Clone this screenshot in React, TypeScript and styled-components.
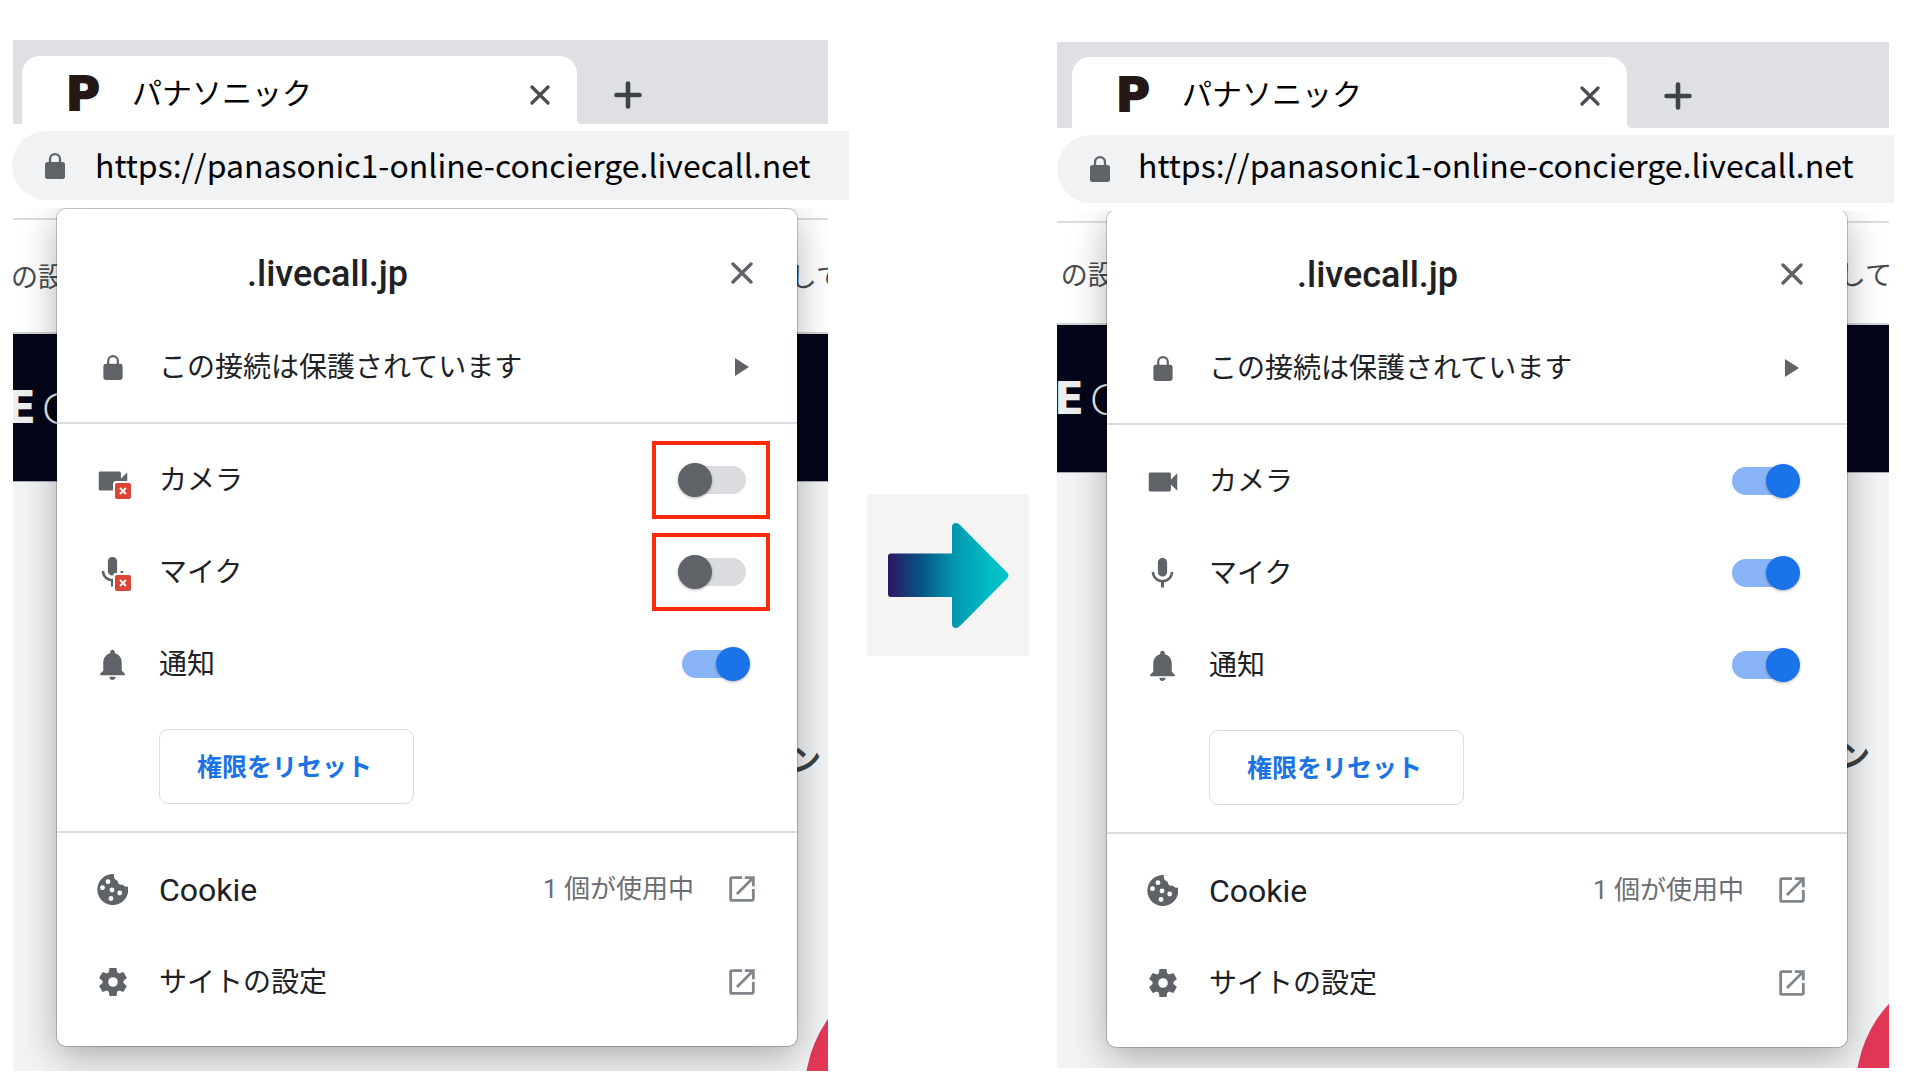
import React from "react";
import styled, { createGlobalStyle, css } from "styled-components";
import { MdMic, MdNotifications, MdOpenInNew, MdVideocam } from "react-icons/md";

const GlobalStyle = createGlobalStyle`
  *, *::before, *::after { box-sizing: border-box; }
  body {
    margin: 0;
    background: #fff;
    color: #202124;
    font-family: Roboto, "Noto Sans CJK JP", sans-serif;
  }
  button, input { font: inherit; color: inherit; }
  svg { display: block; }
`;

const Comparison = styled.main`
  display: flex;
  align-items: flex-start;
  padding: 40px 26px 0 12px;
`;

const Browser = styled.section<{ $drop: number }>`
  flex: 1 1 0;
  min-width: 0;
  padding-top: ${(p) => p.$drop}px;
`;

const TabStrip = styled.div<{ $start: number; $end: number; $inset: number; $top: number; $tall: number }>`
  display: flex;
  height: ${(p) => p.$tall}px;
  margin: 0 ${(p) => p.$end}px 0 ${(p) => p.$start}px;
  padding: ${(p) => p.$top}px 0 0 ${(p) => p.$inset}px;
  background: #dfe0e4;
`;

const Tab = styled.div`
  position: relative;
  flex: 0 1 555px;
  display: flex;
  align-items: flex-start;
  padding: 13px 26px 0 44px;
  border-radius: 18px 18px 0 0;
  background: #fff;

  &::after {
    content: "";
    position: absolute;
    left: 100%;
    bottom: 0;
    width: 5px;
    height: 5px;
    background: radial-gradient(circle at 100% 0, transparent 5px, #fff 5px);
  }
`;

const Favicon = styled.span`
  width: 66px;
  font: 700 46px/50px "DejaVu Sans", sans-serif;
  color: #231815;
  -webkit-text-stroke: 2px #231815;
`;

const TabTitle = styled.span`
  flex: 1;
  font: 400 30px/44px "Noto Sans CJK JP", sans-serif;
  color: #000;
  white-space: nowrap;
`;

const IconButton = styled.button<{ $size: number }>`
  display: grid;
  place-items: center;
  flex: none;
  width: ${(p) => p.$size}px;
  height: ${(p) => p.$size}px;
  padding: 0;
  border: 0;
  background: none;
  color: #5f6368;
`;

const TabClose = styled(IconButton)`
  margin-top: 15px;
  color: #494c50;
`;

const NewTab = styled(IconButton)`
  margin: 22px 0 0 34px;
  color: #3f4246;
`;

const AddressBar = styled.div<{ $gap: number; $tall: number }>`
  display: flex;
  align-items: center;
  height: ${(p) => p.$tall}px;
  margin-top: ${(p) => p.$gap}px;
  padding-left: 33px;
  border-radius: 36px 0 0 36px;
  background: #f1f2f4;
  color: #5f6368;
`;

const Url = styled.input<{ $indent: number; $lift: number }>`
  flex: 1;
  min-width: 0;
  height: 48px;
  margin: 0 0 ${(p) => p.$lift}px ${(p) => p.$indent}px;
  padding: 0;
  border: 0;
  outline: 0;
  background: none;
  font: 400 32px/48px "Noto Sans CJK JP", sans-serif;
  color: #000;
`;

const Viewport = styled.div<{ $start: number; $end: number }>`
  position: relative;
  display: grid;
  overflow: hidden;
  margin: 8px ${(p) => p.$end}px 0 ${(p) => p.$start}px;
`;

const Site = styled.div`
  grid-area: 1 / 1;
  display: flex;
  flex-direction: column;
  min-width: 0;
  background: #f1f3f5;
`;

const SiteNotice = styled.div<{ $tall: number; $line: number; $pull: number; $push: number }>`
  display: flex;
  justify-content: space-between;
  height: ${(p) => p.$tall}px;
  padding-top: 10px;
  background: linear-gradient(#dcdcdc, #dcdcdc) 0 10px / 100% 2px no-repeat, #fff;
  border-bottom: 2px solid #d3d6d6;
  font: 400 27px/${(p) => p.$line}px "Noto Sans CJK JP", sans-serif;
  color: #4a4d50;
  white-space: nowrap;

  span:first-child { margin-left: -${(p) => p.$pull}px; }
  span:last-child { margin-right: -${(p) => p.$push}px; }
`;

const SiteBanner = styled.div<{ $pull: number }>`
  display: flex;
  gap: 6px;
  height: 148px;
  border-bottom: 1px solid #a9abb8;
  background: #040619;
  color: #eceded;
  font: 700 44px/147px "DejaVu Sans", sans-serif;

  b { margin-left: -${(p) => p.$pull}px; }
  span { font-family: Lato, sans-serif; font-weight: 300; }
`;

const SiteBody = styled.div<{ $top: number; $right: number }>`
  padding: ${(p) => p.$top}px ${(p) => p.$right}px 0 0;
  text-align: right;
  font: 700 30px/44px "Noto Sans CJK JP", sans-serif;
  color: #3c4144;
`;

const ChatBubble = styled.div<{ $right: number }>`
  position: absolute;
  right: -${(p) => p.$right}px;
  bottom: -144px;
  width: 248px;
  height: 248px;
  border-radius: 50%;
  background: #e43857;
`;

const Popup = styled.div<{ $margin: string }>`
  position: relative;
  grid-area: 1 / 1;
  margin: ${(p) => p.$margin};
  border-radius: 9px;
  background: #fff;
  box-shadow: 0 0 0 1px rgba(0, 0, 0, 0.2), 0 10px 36px rgba(0, 0, 0, 0.3);
`;

const Group = styled.div<{ $pad: string; $gap?: number }>`
  display: flex;
  flex-direction: column;
  align-items: stretch;
  gap: ${(p) => p.$gap ?? 0}px;
  padding: ${(p) => p.$pad};

  & + & { border-top: 2px solid #dadce0; }
`;

const rowStyle = css`
  display: flex;
  align-items: center;
  width: 100%;
  height: 92px;
  padding: 0 38px 0 37px;
  border: 0;
  background: none;
  text-align: left;
  font-size: 28px;
  line-height: 40px;
`;

const TitleRow = styled.div`
  ${rowStyle}
  justify-content: space-between;
  padding-left: 190px;
`;

const Title = styled.h2`
  margin: 0;
  padding-top: 2px;
  font-size: 36px;
  font-weight: 500;
  line-height: 40px;
`;

const ActionRow = styled.button`
  ${rowStyle}
`;

const PermissionRow = styled.label`
  ${rowStyle}
  padding-right: 51px;
`;

const IconSlot = styled.span`
  position: relative;
  display: grid;
  place-items: center;
  flex: none;
  width: 37px;
  height: 37px;
  margin-right: 28px;
  color: #5f6368;
`;

const BlockedBadge = styled.svg`
  position: absolute;
  right: -2px;
  bottom: -2px;
`;

const Label = styled.span<{ $large?: boolean }>`
  flex: 1;
  padding-top: 2px;
  font-size: ${(p) => (p.$large ? 32 : 28)}px;
`;

const Detail = styled.span`
  margin-right: 31px;
  font-size: 26px;
  color: #6b6e73;
`;

const EndSlot = styled.span`
  display: grid;
  place-items: center;
  width: 34px;
  height: 34px;
  color: #80868b;
`;

const SwitchFrame = styled.span<{ $marked?: boolean }>`
  position: relative;
  display: flex;

  ${(p) =>
    p.$marked &&
    css`
      &::after {
        content: "";
        position: absolute;
        inset: -25px -24px -25px -30px;
        border: 4px solid #ff2a0a;
        pointer-events: none;
      }
    `}
`;

const Switch = styled.input`
  appearance: none;
  position: relative;
  width: 64px;
  height: 28px;
  margin: 0;
  border-radius: 14px;
  background: #dadce0;

  &::before {
    content: "";
    position: absolute;
    top: -3px;
    left: -4px;
    width: 34px;
    height: 34px;
    border-radius: 50%;
    background: #5f6368;
    box-shadow: 0 1px 3px rgba(0, 0, 0, 0.3);
  }

  &:checked { background: #8ab4f8; }
  &:checked::before { left: 34px; background: #1a73e8; }
`;

const ResetButton = styled.button`
  align-self: flex-start;
  height: 75px;
  margin: 19px 0 0 102px;
  padding: 0 41px 4px 37px;
  border: 1px solid #dadce0;
  border-radius: 9px;
  background: #fff;
  color: #1a73e8;
  font-size: 25px;
  font-weight: 700;
`;

const ArrowTile = styled.div`
  display: grid;
  flex: none;
  width: 162px;
  height: 162px;
  margin: 454px 28px 0 18px;
  background: #f4f4f4;
`;

const Cross = ({ size, stroke }: { size: number; stroke: number }) => (
  <svg width={size} height={size} viewBox={`0 0 ${size} ${size}`} aria-hidden="true">
    <path
      d={`M2 2L${size - 2} ${size - 2}M${size - 2} 2L2 ${size - 2}`}
      fill="none"
      stroke="currentColor"
      strokeWidth={stroke}
      strokeLinecap="round"
    />
  </svg>
);

const Lock = ({ height }: { height: number }) => (
  <svg width="20" height={height} viewBox="0 0 20 26" aria-hidden="true">
    <rect y="9" width="20" height="17" rx="2.500" fill="currentColor" />
    <path d="M5 10V6.200a5 5 0 0 1 10 0V10" fill="none" stroke="currentColor" strokeWidth="2.300" />
  </svg>
);

const Cookie = () => (
  <svg width="31" height="31" viewBox="0 0 31 31" aria-hidden="true">
    <path
      d="M17 0.100A15.500 15.500 0 1 0 31 12.500Q28 13.500 25.500 10.500Q21 11.500 20.800 7Q16 5.500 17 0.100Z"
      fill="currentColor"
    />
    <g fill="#fff">
      <circle cx="11" cy="7.700" r="2.400" />
      <circle cx="5.500" cy="13.700" r="2.400" />
      <circle cx="15" cy="16" r="2.400" />
      <circle cx="22.700" cy="19" r="2.400" />
      <circle cx="14" cy="24.500" r="2.400" />
    </g>
  </svg>
);

const Gear = () => (
  <svg width="28" height="28" viewBox="0 0 28 28" aria-hidden="true">
    <g fill="currentColor">
      <circle cx="14" cy="14" r="10.500" />
      {[0, 60, 120].map((turn) => (
        <path key={turn} d="M10.500 0H17.500L18.500 6V22L17.500 28H10.500L9.500 22V6Z" transform={`rotate(${turn} 14 14)`} />
      ))}
    </g>
    <circle cx="14" cy="14" r="4.800" fill="#fff" />
  </svg>
);

const Blocked = () => (
  <BlockedBadge width="20" height="20" viewBox="0 0 20 20" aria-hidden="true">
    <rect width="20" height="20" rx="3" fill="#fff" />
    <rect x="2" y="2" width="16" height="16" rx="2" fill="#db4437" />
    <path d="M7 7l6 6M13 7l-6 6" stroke="#fff" strokeWidth="1.800" />
  </BlockedBadge>
);

type PermissionProps = {
  icon: React.ReactNode;
  name: string;
  allowed: boolean;
};

const Permission = ({ icon, name, allowed }: PermissionProps) => (
  <PermissionRow>
    <IconSlot>
      {icon}
      {!allowed && <Blocked />}
    </IconSlot>
    <Label>{name}</Label>
    <SwitchFrame $marked={!allowed}>
      <Switch type="checkbox" role="switch" defaultChecked={allowed} />
    </SwitchFrame>
  </PermissionRow>
);

const SitePopup = ({ allowed, margin }: { allowed: boolean; margin: string }) => (
  <Popup $margin={margin}>
    <Group $pad="18px 0 9px" $gap={2}>
      <TitleRow>
        <Title>.livecall.jp</Title>
        <IconButton $size={34} aria-label="閉じる">
          <Cross size={22} stroke={3.4} />
        </IconButton>
      </TitleRow>
      <ActionRow>
        <IconSlot><Lock height={25} /></IconSlot>
        <Label>この接続は保護されています</Label>
        <EndSlot>
          <svg width="14" height="18" viewBox="0 0 14 18" aria-hidden="true">
            <path d="M0 0L14 9L0 18Z" fill="#5f6368" />
          </svg>
        </EndSlot>
      </ActionRow>
    </Group>
    <Group $pad="10px 0 27px">
      <Permission icon={<MdVideocam size={38} />} name="カメラ" allowed={allowed} />
      <Permission icon={<MdMic size={37} />} name="マイク" allowed={allowed} />
      <Permission icon={<MdNotifications size={37} />} name="通知" allowed />
      <ResetButton>権限をリセット</ResetButton>
    </Group>
    <Group $pad="10px 0 18px" $gap={1}>
      <ActionRow>
        <IconSlot><Cookie /></IconSlot>
        <Label $large>Cookie</Label>
        <Detail>1 個が使用中</Detail>
        <EndSlot><MdOpenInNew size={34} /></EndSlot>
      </ActionRow>
      <ActionRow>
        <IconSlot><Gear /></IconSlot>
        <Label>サイトの設定</Label>
        <EndSlot><MdOpenInNew size={34} /></EndSlot>
      </ActionRow>
    </Group>
  </Popup>
);

const TabContent = () => (
  <>
    <Tab>
      <Favicon>P</Favicon>
      <TabTitle>パナソニック</TabTitle>
      <TabClose $size={22} aria-label="タブを閉じる">
        <Cross size={20} stroke={3.2} />
      </TabClose>
    </Tab>
    <NewTab $size={34} aria-label="新しいタブ">
      <svg width="28" height="28" viewBox="0 0 28 28" aria-hidden="true">
        <path d="M14 2.500V25.500M2.500 14H25.500" stroke="currentColor" strokeWidth="4.600" strokeLinecap="round" />
      </svg>
    </NewTab>
  </>
);

const address = "https://panasonic1-online-concierge.livecall.net";

export default function App() {
  return (
    <>
      <GlobalStyle />
      <Comparison>
        <Browser $drop={0}>
          <TabStrip $start={1} $end={21} $inset={9} $top={16} $tall={84}>
            <TabContent />
          </TabStrip>
          <AddressBar $gap={7} $tall={69}>
            <Lock height={26} />
            <Url $indent={30} $lift={4} defaultValue={address} aria-label="アドレス" />
          </AddressBar>
          <Viewport $start={1} $end={21}>
            <Site>
              <SiteNotice $tall={126} $line={116} $pull={2} $push={15}>
                <span>の設定</span>
                <span>して</span>
              </SiteNotice>
              <SiteBanner $pull={7}>
                <b>E</b>
                <span>C</span>
              </SiteBanner>
              <SiteBody $top={253} $right={7}>ン</SiteBody>
            </Site>
            <ChatBubble $right={225} />
            <SitePopup allowed={false} margin="1px 31px 25px 44px" />
          </Viewport>
        </Browser>

        <ArrowTile>
          <svg width="162" height="162" viewBox="0 0 162 162" role="img" aria-label="変更後">
            <defs>
              <linearGradient id="arrow" x1="0" x2="1" y1="0" y2="0">
                <stop offset="0" stopColor="#2b1760" />
                <stop offset="0.3" stopColor="#045a8b" />
                <stop offset="0.55" stopColor="#0498b0" />
                <stop offset="0.85" stopColor="#02bcc5" />
                <stop offset="1" stopColor="#02c5cd" />
              </linearGradient>
            </defs>
            <path
              fill="url(#arrow)"
              d="M24 59.500H85V33Q85 29 89 29Q91 29 93 31L140 78.500Q143 81.500 140 84.500L93 132Q91 134 89 134Q85 134 85 130V103H24Q21 103 21 100V62.500Q21 59.500 24 59.500Z"
            />
          </svg>
        </ArrowTile>

        <Browser $drop={2}>
          <TabStrip $start={0} $end={5} $inset={15} $top={15} $tall={86}>
            <TabContent />
          </TabStrip>
          <AddressBar $gap={7} $tall={68}>
            <Lock height={26} />
            <Url $indent={28} $lift={11} defaultValue={address} aria-label="アドレス" />
          </AddressBar>
          <Viewport $start={0} $end={5}>
            <Site>
              <SiteNotice $tall={114} $line={106} $pull={23} $push={3}>
                <span>との設定</span>
                <span>して</span>
              </SiteNotice>
              <SiteBanner $pull={3}>
                <b>E</b>
                <span>C</span>
              </SiteBanner>
              <SiteBody $top={258} $right={19}>ン</SiteBody>
            </Site>
            <ChatBubble $right={215} />
            <SitePopup allowed margin="-1px 42px 21px 50px" />
          </Viewport>
        </Browser>
      </Comparison>
    </>
  );
}
